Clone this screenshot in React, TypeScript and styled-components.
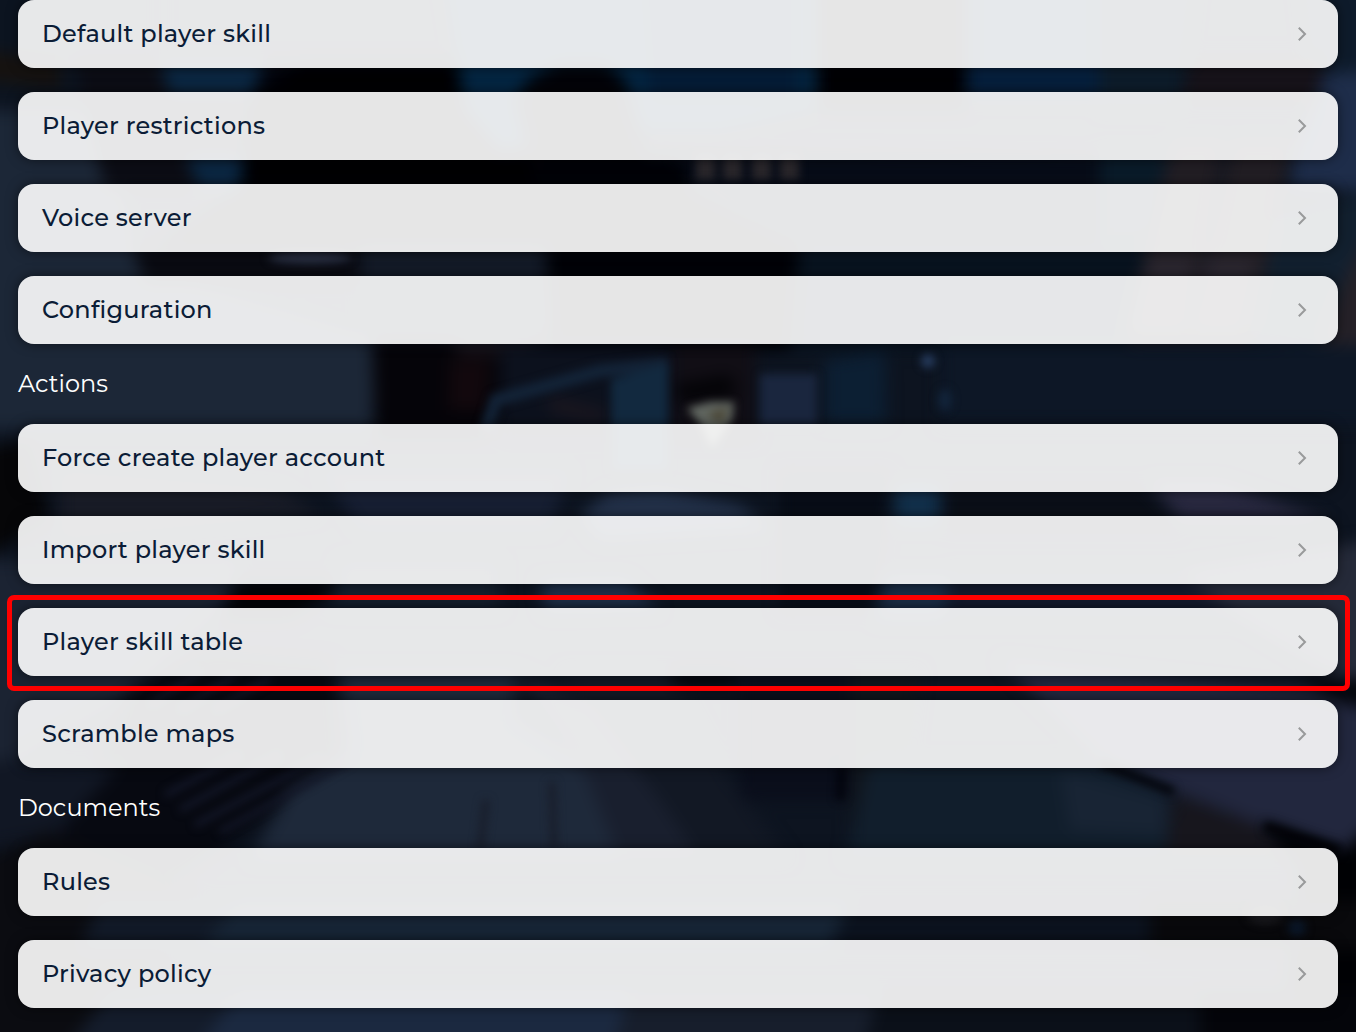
import React from "react";
import styled, { createGlobalStyle } from "styled-components";

const GlobalStyle = createGlobalStyle`
  * { box-sizing: border-box; }
  html, body { margin: 0; background: #0b111c; }
  body { overflow: hidden; }
`;

const Page = styled.main`
  position: relative;
  isolation: isolate;
  height: 1032px;
  padding: 0 18px;
  overflow: hidden;
  font-family: Montserrat, Inter, "Liberation Sans", sans-serif;
`;

const Backdrop = styled.svg`
  position: absolute;
  inset: 0;
  z-index: -1;
  width: 1356px;
  height: 1032px;
`;

const Group = styled.section`
  display: flex;
  flex-direction: column;
  gap: 24px;
`;

const Heading = styled.h2`
  display: flex;
  align-items: center;
  height: 80px;
  margin: 0;
  color: #fff;
  font-size: 24px;
  font-weight: 400;
  line-height: 28px;
`;

const Card = styled.a`
  position: relative;
  display: flex;
  align-items: center;
  justify-content: space-between;
  height: 68px;
  padding: 0 31px 0 24px;
  border-radius: 16px;
  background: rgba(255, 255, 255, 0.9);
  box-shadow: 0 0 12px rgba(0, 0, 0, 0.5);
  color: #0b1c36;
  font-size: 24px;
  font-weight: 530;
  line-height: 28px;
  letter-spacing: 0.24px;
  font-variant-ligatures: none;
  cursor: pointer;
`;

const Label = styled.span`
  white-space: nowrap;
`;

const Chevron = styled.svg`
  width: 9px;
  height: 14px;
  fill: none;
  stroke: #999a9b;
  stroke-width: 2;
`;

const Highlight = styled.div`
  position: absolute;
  inset: -13px -12px -15px -11px;
  border: 5px solid #f00;
  border-radius: 7px;
  pointer-events: none;
`;

interface Item {
  label: string;
  marked?: boolean;
}

interface Section {
  title?: string;
  items: Item[];
}

const sections: Section[] = [
  {
    items: [
      { label: "Default player skill" },
      { label: "Player restrictions" },
      { label: "Voice server" },
      { label: "Configuration" },
    ],
  },
  {
    title: "Actions",
    items: [
      { label: "Force create player account" },
      { label: "Import player skill" },
      { label: "Player skill table", marked: true },
      { label: "Scramble maps" },
    ],
  },
  {
    title: "Documents",
    items: [{ label: "Rules" }, { label: "Privacy policy" }],
  },
];

/* Out-of-focus interior: [fill, polygon points], painted back to front. */
const shapes: [string, string][] = [
  // left wall
  ["#0c1420", "-20,-20 160,-20 160,100 -20,100"],
  ["#16120f", "-20,50 60,62 60,88 -20,80"],
  ["#1c2737", "-20,110 100,110 140,270 380,340 372,430 -20,430"],
  ["#0c0d15", "75,60 240,60 240,190 105,190"],
  ["#0b2742", "160,62 265,62 255,96 170,96"],
  ["#0b2742", "185,155 262,155 240,190 200,190"],
  ["#04060f", "265,60 310,60 330,100 250,100"],
  ["#000003", "305,60 460,60 560,180 560,250 150,250 240,190 250,100"],
  ["#0a0b12", "132,245 360,245 360,285 145,285"],
  ["#131a27", "360,245 552,245 552,330 360,330"],
  // windows behind the figures
  ["#042541", "445,-20 815,-20 815,110 720,130 640,130 500,150 465,110"],
  ["#030308", "515,100 530,78 560,62 605,62 625,80 660,200 540,200"],
  ["#051c36", "640,-20 798,-20 798,105 650,105"],
  ["#000004", "818,-20 965,-20 965,110 820,110"],
  ["#061f3c", "967,-20 1120,-20 1120,100 967,100"],
  ["#0d1c2a", "1100,-20 1195,-20 1180,110 1100,110"],
  ["#010207", "540,155 690,155 690,190 800,245 800,350 552,350"],
  ["#070c18", "660,150 1100,155 1100,240 800,240"],
  ["#08131f", "800,240 1145,240 1130,350 790,350"],
  ["#0a1b29", "1100,150 1168,150 1150,240 1100,240"],
  // shelves on the right
  ["#0e1b2b", "1300,-20 1376,-20 1376,90 1310,70"],
  ["#17131a", "1192,55 1325,55 1315,105 1180,105"],
  ["#1e2d4a", "1325,75 1376,70 1376,190 1290,190 1295,150"],
  ["#12202f", "1275,215 1376,190 1376,350 1250,340"],
  ["#221e24", "1172,140 1224,140 1190,340 1125,340"],
  ["#221e24", "1232,140 1292,140 1252,340 1190,340"],
  ["#2b2730", "1148,258 1194,258 1184,330 1130,330"],
  ["#2b2730", "1206,258 1256,258 1240,330 1192,330"],
  ["#252128", "1376,220 1376,350 1318,348 1340,290"],
  // middle of the room
  ["#0d1726", "940,345 1376,345 1376,425 940,425"],
  ["#050409", "372,340 560,340 480,440 376,440"],
  ["#12080d", "450,360 490,360 484,410 448,410"],
  ["#1b151c", "450,340 540,340 500,354 460,354"],
  ["#0c111d", "500,345 670,345 670,440 500,440"],
  ["#1c171f", "550,397 610,412 600,422 550,412"],
  ["#110e15", "672,345 755,345 755,440 672,440"],
  ["#030306", "675,385 730,375 738,395 680,402"],
  ["#0c1f33", "825,360 885,352 886,424 825,424"],
  // floor, left half
  ["#060608", "-20,450 30,440 50,520 -20,560"],
  ["#191c27", "60,470 280,488 320,515 60,540"],
  ["#171f33", "320,470 570,470 550,530 360,530"],
  ["#1b2332", "-20,560 240,560 220,610 120,700 -20,780"],
  ["#030407", "240,580 350,580 290,620 220,620"],
  ["#151f2d", "340,560 500,560 500,610 330,610"],
  ["#070911", "130,690 210,650 330,660 335,700 340,760 220,850 180,880 40,880"],
  ["#111724", "-20,760 120,765 60,830 -20,850"],
  ["#0b0c11", "-20,860 50,830 210,900 90,1052 -20,1052"],
  ["#233149", "580,515 610,492 660,488 740,505 770,530 600,540"],
  ["#1e2f48", "540,580 625,578 660,610 545,612"],
  ["#080d17", "780,470 890,470 875,612 780,612"],
  ["#12304b", "895,485 940,485 940,525 895,525"],
  ["#0b0f18", "945,485 1140,485 1180,530 945,530"],
  ["#292940", "1150,482 1220,482 1330,520 1180,520"],
  ["#1a2c44", "885,575 950,575 945,620 875,620"],
  ["#13192b", "950,570 1240,570 1290,620 950,620"],
  ["#252a39", "1180,570 1376,540 1376,700 1240,620"],
  // floor, right half
  ["#1e293a", "340,670 515,670 515,720 640,800 660,860 250,860 290,790 350,750"],
  ["#191f2e", "515,670 620,720 690,800 720,860 620,860 580,760"],
  ["#121824", "560,670 670,670 730,780 790,860 700,860 660,800"],
  ["#020307", "672,670 735,670 735,685 672,685"],
  ["#0a0e1b", "740,670 870,670 852,800 740,800"],
  ["#10151c", "850,670 920,670 900,830 850,830"],
  ["#111e2c", "870,760 1160,760 1175,860 845,860"],
  ["#182434", "1060,770 1170,800 1165,835 1070,830"],
  ["#22273e", "1000,660 1376,700 1376,840 1345,850 1260,825 1170,790 1100,760"],
  ["#03050b", "1300,676 1376,680 1376,710 1330,700"],
  ["#17161d", "1175,795 1260,825 1290,860 1165,860"],
  ["#010205", "1262,822 1345,850 1376,820 1376,1052 1280,1052 1300,870"],
  ["#121a28", "100,900 300,900 300,950 80,950"],
  ["#172536", "240,900 850,900 830,950 200,950"],
  ["#0c131f", "850,900 1150,900 1150,950 830,950"],
  ["#09090c", "1150,900 1376,900 1376,950 1150,950"],
  ["#141c2b", "110,990 300,990 300,1060 60,1060"],
  ["#1b2940", "240,990 640,990 620,1060 190,1060"],
  ["#171e2c", "630,990 880,990 860,1060 610,1060"],
  ["#0b1019", "880,990 1200,990 1200,1060 860,1060"],
  ["#04050a", "1200,990 1376,990 1376,1060 1200,1060"],
];

const Scene = () => (
  <Backdrop viewBox="0 0 1356 1032" aria-hidden="true">
    <defs>
      <filter
        id="soft"
        x="-5%"
        y="-5%"
        width="110%"
        height="110%"
        colorInterpolationFilters="sRGB"
      >
        <feGaussianBlur stdDeviation="8" />
      </filter>
      <filter
        id="detail"
        x="-10%"
        y="-10%"
        width="120%"
        height="120%"
        colorInterpolationFilters="sRGB"
      >
        <feGaussianBlur stdDeviation="4" />
      </filter>
    </defs>
    <rect width="1356" height="1032" fill="#0d1420" />
    <g filter="url(#soft)">
      {shapes.map(([fill, points]) => (
        <polygon key={points} fill={fill} points={points} />
      ))}
    </g>
    <g filter="url(#detail)">
      {[696, 723, 752, 780].map((x) => (
        <rect key={x} x={x} y="156" width="19" height="24" fill="#2a272b" />
      ))}
      <ellipse cx="310" cy="258" rx="42" ry="6" fill="#282f42" />
      <path
        d="M486 430 L496 400 L600 371 L668 364"
        stroke="#132337"
        strokeWidth="13"
        fill="none"
      />
      <path d="M611 380 L668 364 L668 470 L612 470Z" fill="#12293f" />
      <path d="M760 374 H817 V426 H760Z" fill="#1a263e" />
      <path d="M687 408 L710 402 L734 402 L732 420 L712 448 L700 424Z" fill="#626862" />
      <path d="M706 414 L728 407 L722 424Z" fill="#4c4838" />
      <circle cx="928" cy="361" r="7" fill="#263c5e" />
      <ellipse cx="945" cy="400" rx="7" ry="11" fill="#12243a" />
      <path
        d="M165 795 L240 755 M180 810 L280 755 M195 825 L320 758 M220 832 L350 760 M150 705 L200 672 M180 710 L235 675 M215 710 L270 678"
        stroke="#131728"
        strokeWidth="6"
      />
      <path d="M1100 763 L1174 792" stroke="#03050b" strokeWidth="9" />
      <path d="M1264 826 L1340 851" stroke="#010206" strokeWidth="10" />
      <path d="M552 782 L554 848 M486 800 L480 850" stroke="#191e2b" strokeWidth="7" />
      <path d="M842 765 L840 800" stroke="#02030c" strokeWidth="8" />
      <circle cx="1297" cy="928" r="9" fill="#0b1728" />
      <ellipse cx="1265" cy="914" rx="18" ry="10" fill="#1a1a1e" />
    </g>
  </Backdrop>
);

const MenuCard = ({ label, marked }: Item) => (
  <Card>
    <Label>{label}</Label>
    <Chevron viewBox="0 0 9 14" aria-hidden="true">
      <path d="M0.8 0.8 L7 7 L0.8 13.2" />
    </Chevron>
    {marked && <Highlight />}
  </Card>
);

export default function App() {
  return (
    <>
      <GlobalStyle />
      <Page>
        <Scene />
        {sections.map((section, i) => (
          <React.Fragment key={i}>
            {section.title && <Heading>{section.title}</Heading>}
            <Group>
              {section.items.map((item) => (
                <MenuCard key={item.label} {...item} />
              ))}
            </Group>
          </React.Fragment>
        ))}
      </Page>
    </>
  );
}
